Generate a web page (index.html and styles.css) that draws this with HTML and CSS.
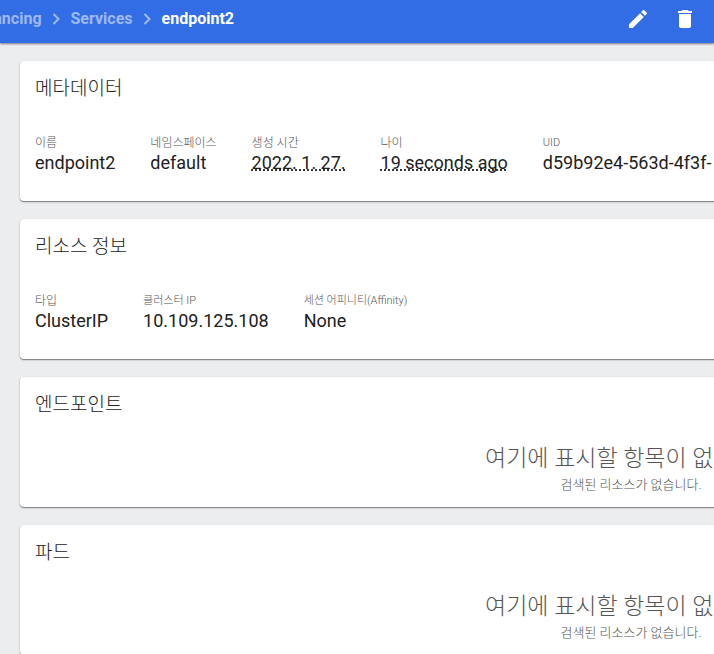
FILE: index.html
```html
<!DOCTYPE html>
<html lang="ko">
<head>
    <meta charset="UTF-8">
    <meta name="viewport" content="width=device-width, initial-scale=1.0">
    <title>endpoint2 - Kubernetes Dashboard</title>
    <link rel="stylesheet" href="styles.css">
</head>
<body>
    <header class="toolbar">
        <nav class="breadcrumbs">
            <a href="#">Balancing</a>
            <svg class="chevron" viewBox="0 0 9 12"><path d="M1.5 1l5 5-5 5"/></svg>
            <a href="#">Services</a>
            <svg class="chevron" viewBox="0 0 9 12"><path d="M1.5 1l5 5-5 5"/></svg>
            <span class="current">endpoint2</span>
        </nav>
        <div class="actions">
            <button type="button" aria-label="편집">
                <svg viewBox="0 0 24 24"><path d="M3 17.25V21h3.75L17.81 9.94l-3.75-3.75L3 17.25zM20.71 7.04a1 1 0 0 0 0-1.41l-2.34-2.34a1 1 0 0 0-1.41 0l-1.83 1.83 3.75 3.75 1.83-1.83z"/></svg>
            </button>
            <button type="button" aria-label="삭제">
                <svg viewBox="0 0 24 24"><path d="M6 19c0 1.1.9 2 2 2h8c1.1 0 2-.9 2-2V7H6v12zM19 4h-3.5l-1-1h-5l-1 1H5v2h14V4z"/></svg>
            </button>
        </div>
    </header>

    <main class="content">
        <section class="card">
            <h2 class="card-title">메타데이터</h2>
            <dl class="properties">
                <div class="property">
                    <dt>이름</dt>
                    <dd>endpoint2</dd>
                </div>
                <div class="property">
                    <dt>네임스페이스</dt>
                    <dd>default</dd>
                </div>
                <div class="property">
                    <dt>생성 시간</dt>
                    <dd><span class="date">2022. 1. 27.</span></dd>
                </div>
                <div class="property">
                    <dt>나이</dt>
                    <dd><span class="date">19 seconds ago</span></dd>
                </div>
                <div class="property">
                    <dt class="latin">UID</dt>
                    <dd>d59b92e4-563d-4f3f-</dd>
                </div>
            </dl>
        </section>

        <section class="card">
            <h2 class="card-title">리소스 정보</h2>
            <dl class="properties">
                <div class="property">
                    <dt>타입</dt>
                    <dd>ClusterIP</dd>
                </div>
                <div class="property">
                    <dt class="latin">클러스터 IP</dt>
                    <dd>10.109.125.108</dd>
                </div>
                <div class="property">
                    <dt class="latin">세션 어피니티(Affinity)</dt>
                    <dd>None</dd>
                </div>
            </dl>
        </section>

        <section class="card">
            <h2 class="card-title">엔드포인트</h2>
            <div class="empty">
                <p class="empty-title">여기에 표시할 항목이 없습니다</p>
                <p class="empty-text">검색된 리소스가 없습니다.</p>
            </div>
        </section>

        <section class="card">
            <h2 class="card-title">파드</h2>
            <div class="empty">
                <p class="empty-title">여기에 표시할 항목이 없습니다</p>
                <p class="empty-text">검색된 리소스가 없습니다.</p>
            </div>
        </section>
    </main>
</body>
</html>
```

FILE: styles.css
```css
* {
    margin: 0;
    padding: 0;
    box-sizing: border-box;
}

body {
    font-family: Roboto, "Noto Sans CJK KR", sans-serif;
    background: #ecedef;
    color: #212121;
    height: 100vh;
    overflow: hidden;
}

.toolbar {
    display: flex;
    align-items: center;
    justify-content: space-between;
    height: 43px;
    padding: 0 17px 6px 0;
    background: #326de6;
    box-shadow: 0 1px 2px rgba(0, 0, 0, 0.5);
}

/* long paths are cut off on the left */
.breadcrumbs {
    display: flex;
    align-items: center;
    justify-content: flex-end;
    gap: 10px;
    width: 234px;
    overflow: hidden;
    font-size: 16px;
    font-weight: 700;
    line-height: 24px;
    white-space: nowrap;
}

.breadcrumbs a {
    color: #9db9f3;
    text-decoration: none;
}

.breadcrumbs .current {
    color: #fff;
}

.chevron {
    flex: none;
    width: 9px;
    height: 12px;
    fill: none;
    stroke: #9db9f3;
    stroke-width: 2;
}

.actions {
    display: flex;
    gap: 23px;
}

.actions button {
    width: 24px;
    height: 24px;
    background: none;
    border: none;
    cursor: pointer;
}

.actions svg {
    display: block;
    width: 24px;
    height: 24px;
    fill: #fff;
}

.content {
    display: flex;
    flex-direction: column;
    gap: 18px;
    min-width: 1262px;
    padding: 18px 20px;
}

.card {
    padding: 16px 15px 12px;
    background: #fff;
    border-radius: 4px;
    box-shadow: 0 1px 1px rgba(0, 0, 0, 0.4), 0 1px 3px rgba(0, 0, 0, 0.15);
}

.card-title {
    font-size: 19px;
    font-weight: 300;
    line-height: 24px;
}

.properties {
    display: flex;
    gap: 35px;
    padding: 33px 0 15px;
}

.property dt {
    font-size: 12px;
    font-weight: 300;
    line-height: 18px;
    color: #555;
}

.property dt.latin {
    font-size: 11px;
}

.property dd {
    font-size: 18px;
    line-height: 22px;
    white-space: nowrap;
}

.date {
    text-decoration: underline dotted;
    text-decoration-skip-ink: none;
}

.empty {
    padding-top: 26px;
    text-align: center;
    font-weight: 300;
    color: #555;
}

.empty-title {
    font-size: 23px;
    line-height: 32px;
}

.empty-text {
    font-size: 13px;
    line-height: 20px;
}
```
